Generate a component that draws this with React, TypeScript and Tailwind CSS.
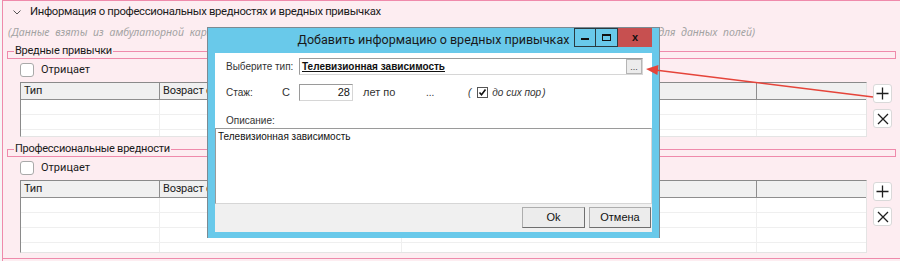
import React from "react";

const PINK_LINE = "border-[#ef8aab]";

function PlusBtn() {
  return (
    <div className="w-[19px] h-[19px] bg-white border border-[#d9d9d9] rounded-[3px] flex items-center justify-center">
      <svg width="13" height="13" viewBox="0 0 13 13">
        <path d="M6.5 0.5 V12.5 M0.5 6.5 H12.5" stroke="#1f1f1f" strokeWidth="1.3" fill="none" />
      </svg>
    </div>
  );
}

function CrossBtn() {
  return (
    <div className="w-[19px] h-[19px] bg-white border border-[#d9d9d9] rounded-[3px] flex items-center justify-center">
      <svg width="12" height="12" viewBox="0 0 12 12">
        <path d="M1 1 L11 11 M11 1 L1 11" stroke="#1f1f1f" strokeWidth="1.3" fill="none" />
      </svg>
    </div>
  );
}

function Grid({ height }: { height: number }) {
  const rows = [0, 1, 2, 3, 4, 5];
  return (
    <div
      className="w-[847px] overflow-hidden bg-white border-l border-t border-[#8a8a8a] border-r border-r-[#e4e4e4] border-b border-b-[#e4e4e4]"
      style={{ height }}
    >
      <div className="flex h-[17px] bg-[#f0f0f0] border-b border-[#8e8e8e] text-[11px] text-[#222] leading-[16px] tracking-[-0.2px]">
        <div className="w-[139px] shrink-0 border-r border-[#8e8e8e] pl-[3px]">Тип</div>
        <div className="w-[242px] shrink-0 border-r border-[#8e8e8e] pl-[3px] whitespace-nowrap">Возраст с</div>
        <div className="w-[355px] shrink-0 border-r border-[#8e8e8e]"></div>
        <div className="flex-1"></div>
      </div>
      {rows.map((r) => (
        <div key={r} className="flex h-[15px] border-b border-[#efefef]">
          <div className="w-[139px] shrink-0 border-r border-[#efefef]"></div>
          <div className="w-[242px] shrink-0 border-r border-[#efefef]"></div>
          <div className="w-[355px] shrink-0 border-r border-[#efefef]"></div>
          <div className="flex-1"></div>
        </div>
      ))}
    </div>
  );
}

function Group({ title, tableHeight }: { title: string; tableHeight: number }) {
  return (
    <>
      <fieldset className={`mx-[4px] px-[6px] border ${PINK_LINE}`}>
        <legend className="px-[1px] text-[11px] leading-[14px] text-[#1a1a1a] whitespace-nowrap tracking-[-0.25px]">{title}</legend>
      </fieldset>
      <div className="mt-[4px] pl-[17px] flex items-center h-[14px]">
        <div className="w-[14px] h-[14px] rounded-[3px] border border-[#a9a9a9] bg-white" />
        <span className="ml-[7px] text-[11px] text-[#1a1a1a]">Отрицает</span>
      </div>
      <div className="mt-[5px] flex">
        <div className="ml-[17px]">
          <Grid height={tableHeight} />
        </div>
        <div className="ml-[6px] mt-[2px] flex flex-col gap-[6px]">
          <PlusBtn />
          <CrossBtn />
        </div>
      </div>
    </>
  );
}

function Dialog() {
  return (
    <div className="absolute left-[207px] top-[27px] w-[453px] h-[211px] border-l border-t border-r border-[#7c8a92] bg-[#69c9ea] flex flex-col px-[7px] pb-[6px] font-['Liberation_Sans',sans-serif] text-[#1e1e1e] whitespace-nowrap">
      <div className="h-[25px] flex items-start shrink-0">
        <div className="w-[78px] shrink-0" />
        <div className="flex-1 text-center self-center font-['Roboto',sans-serif] text-[12.5px] text-[#1a1a1a]">
          Добавить информацию о вредных привычках
        </div>
        <div className="flex h-[19px]">
          <div className="w-[22px] h-[19px] border border-[#2a3a40] flex items-center justify-center">
            <div className="w-[8px] h-[2px] bg-[#111] mt-[2px]" />
          </div>
          <div className="w-[22px] h-[19px] border-t border-b border-r border-[#2a3a40] flex items-center justify-center">
            <div className="w-[9px] h-[7px] border border-[#111] border-t-[2px]" />
          </div>
          <div className="w-[34px] h-[19px] bg-[#c75050] flex items-center justify-center">
            <span className="text-[11px] font-bold text-[#111] leading-none">x</span>
          </div>
        </div>
      </div>
      <div className="flex-1 bg-white flex flex-col text-[10px]">
        <div className="mt-[5px] pl-[11px] flex items-center h-[17px]">
          <span className="w-[73px] shrink-0 text-[#333]">Выберите тип:</span>
          <div className="w-[344px] h-[17px] flex border border-[#9a9a9a] border-r-[#d6d6d6] border-b-[#d6d6d6] bg-white">
            <div className="flex-1 pl-[2px] leading-[15px] font-bold underline text-[#111] overflow-hidden">
              Телевизионная зависимость
            </div>
            <div className="w-[16px] h-full bg-[#ececec] border border-[#b5b5b5] flex items-end justify-center text-[9px] leading-[12px] text-[#444]">
              ...
            </div>
          </div>
        </div>
        <div className="mt-[9px] pl-[11px] flex items-center h-[17px] text-[#333]">
          <span className="w-[56px] shrink-0">Стаж:</span>
          <span className="w-[17px] shrink-0 text-[11px]">С</span>
          <div className="w-[54px] h-[17px] border border-[#9a9a9a] border-r-[#d6d6d6] border-b-[#d6d6d6] text-right pr-[2px] leading-[15px] text-[#111] text-[11px]">
            28
          </div>
          <span className="ml-[10px] w-[63px] shrink-0 text-[11px]">лет по</span>
          <span className="w-[42px] shrink-0">...</span>
          <span className="italic">(</span>
          <div className="ml-[6px] w-[11px] h-[11px] border border-[#555] bg-white flex items-center justify-center">
            <svg width="9" height="9" viewBox="0 0 9 9">
              <path d="M1.5 4.5 L3.5 6.8 L7.5 1.5" stroke="#111" strokeWidth="1.6" fill="none" />
            </svg>
          </div>
          <span className="ml-[4px] italic w-[50px] shrink-0">до сих пор</span>
          <span className="italic">)</span>
        </div>
        <div className="mt-[13px] pl-[11px] h-[14px] leading-[14px] text-[#333]">Описание:</div>
        <div className="h-[76px] border border-[#9a9a9a] border-r-[#d6d6d6] border-b-[#d6d6d6] pl-[2px] pt-[1px] text-[#111] leading-[13px]">
          Телевизионная зависимость
        </div>
        <div className="flex-1 bg-[#f0f0f0] flex justify-end items-start pt-[3px] gap-[4px] pr-[1px] text-[11px]">
          <div className="w-[63px] h-[21px] bg-[#ececec] border border-[#adadad] border-r-[#6f6f6f] border-b-[#6f6f6f] flex items-center justify-center text-[#111]">
            Ok
          </div>
          <div className="w-[62px] h-[21px] bg-[#ececec] border border-[#adadad] border-r-[#6f6f6f] border-b-[#6f6f6f] flex items-center justify-center text-[#111]">
            Отмена
          </div>
        </div>
      </div>
    </div>
  );
}

function Arrow() {
  return (
    <svg className="absolute left-0 top-0 pointer-events-none" width="900" height="261" viewBox="0 0 900 261">
      <line x1="873" y1="97" x2="655" y2="70" stroke="#e5443a" strokeWidth="1.6" />
      <polygon points="646,69 658.5,65 657.4,75" fill="#e5443a" />
    </svg>
  );
}

export default function App() {
  return (
    <div className="relative w-[900px] h-[261px] overflow-hidden flex bg-white font-['Roboto',sans-serif]">
      <div className="w-[2px] shrink-0 bg-[#f6f6f6]" />
      <div className={`flex-1 flex flex-col bg-[#fdedf1] border-l border-[#d2d2d2] border-t ${PINK_LINE}`}>
        <div className="h-[22px] flex items-center pl-[10px]">
          <svg width="8" height="5" viewBox="0 0 8 5">
            <path d="M0.5 0.5 L4 4 L7.5 0.5" stroke="#555" strokeWidth="1" fill="none" />
          </svg>
          <span className="ml-[9px] text-[11.3px] text-[#1a1a1a] whitespace-nowrap tracking-[-0.33px]">
            Информация о профессиональных вредностях и вредных привычках
          </span>
        </div>
        <div className="h-[19px] flex items-center pl-[5px]">
          <div className="w-[747px] flex justify-between font-['Noto_Sans',sans-serif] text-[10.5px] italic text-[#a3a3a3] [word-spacing:3px] whitespace-nowrap">
            <span>(Данные взяты из амбулаторной карты пациента</span>
            <span>для данных полей)</span>
          </div>
        </div>
        <div className="mt-[2px]" />
        <Group title="Вредные привычки" tableHeight={55} />
        <div className="mt-[5px]" />
        <Group title="Профессиональные вредности" tableHeight={73} />
        <div className={`mt-[5px] border-t ${PINK_LINE}`} />
      </div>
      <Dialog />
      <Arrow />
    </div>
  );
}
